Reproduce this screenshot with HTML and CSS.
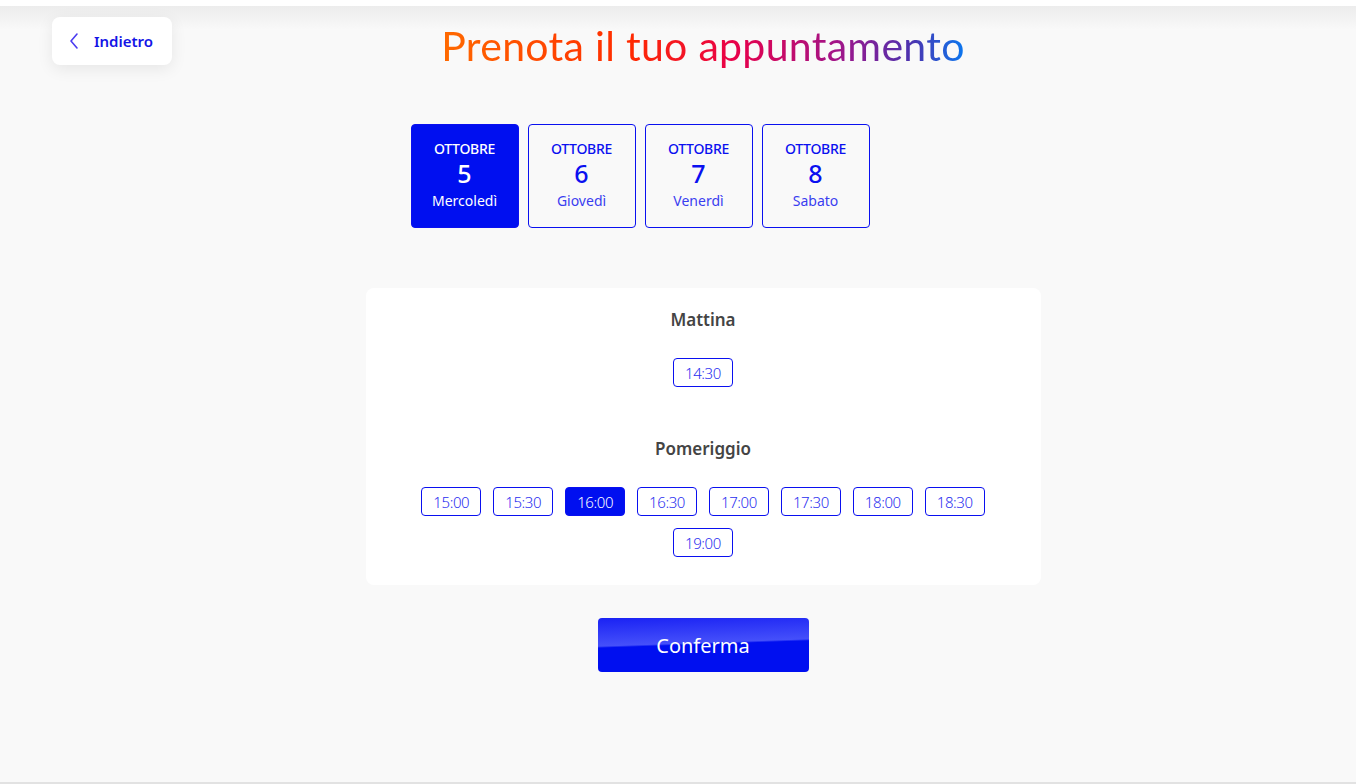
FILE: index.html
```html
<!DOCTYPE html>
<html lang="it">
<head>
  <meta charset="UTF-8" />
  <meta name="viewport" content="width=device-width, initial-scale=1.0"/>
  <title>Prenota il tuo appuntamento</title>
  <link rel="stylesheet" href="styles.css">
</head>
<body>
  <div class="topbar"></div>
  <div class="page">
    <a href="#" class="back-btn">
      <svg width="12" height="18" viewBox="0 0 12 18"><path d="M9 2 L3 9 L9 16" fill="none" stroke="#4b3cf0" stroke-width="1.6" stroke-linecap="round" stroke-linejoin="round"/></svg>
      <span>Indietro</span>
    </a>

    <div class="main">
      <div class="title-row">
        <h1 class="title">Prenota il tuo appuntamento</h1>
      </div>

      <div class="wrap">
        <div class="days">
          <div class="day active">
            <div class="month">OTTOBRE</div>
            <div class="num">5</div>
            <div class="weekday">Mercoledì</div>
          </div>
          <div class="day">
            <div class="month">OTTOBRE</div>
            <div class="num">6</div>
            <div class="weekday">Giovedì</div>
          </div>
          <div class="day">
            <div class="month">OTTOBRE</div>
            <div class="num">7</div>
            <div class="weekday">Venerdì</div>
          </div>
          <div class="day">
            <div class="month">OTTOBRE</div>
            <div class="num">8</div>
            <div class="weekday">Sabato</div>
          </div>
        </div>

        <div class="slots-card">
          <h2>Mattina</h2>
          <div class="slots">
            <button class="slot">14:30</button>
          </div>

          <h2 class="afternoon">Pomeriggio</h2>
          <div class="slots">
            <button class="slot">15:00</button>
            <button class="slot">15:30</button>
            <button class="slot selected">16:00</button>
            <button class="slot">16:30</button>
            <button class="slot">17:00</button>
            <button class="slot">17:30</button>
            <button class="slot">18:00</button>
            <button class="slot">18:30</button>
            <button class="slot">19:00</button>
          </div>
        </div>

        <div class="actions">
          <button class="confirm-btn">Conferma</button>
        </div>
      </div>
    </div>
  </div>
</body>
</html>
```

FILE: styles.css
```css
html, body { margin: 0; padding: 0; }
body { font-family: "Noto Sans", "Open Sans", Arial, sans-serif; background-color: #f9f9f9; height: 784px; overflow: hidden; }

.topbar { height: 6px; background: #fff; }
.page {
  position: relative;
  height: 776px;
  border-bottom: 2px solid #e2e2e2;
  background: linear-gradient(to bottom, #ececec 0px, #f9f9f9 24px);
}

.back-btn {
  position: absolute;
  left: 52px;
  top: 11px;
  width: 120px;
  height: 48px;
  box-sizing: border-box;
  padding-left: 16px;
  display: flex;
  align-items: center;
  gap: 14px;
  background: #fff;
  border-radius: 8px;
  box-shadow: 0 4px 16px rgba(0,0,0,0.08);
  text-decoration: none;
  color: #1414e6;
  font-size: 15px;
  font-weight: 600;
}

.main { padding-left: 50px; }

.title-row { display: flex; justify-content: center; padding-top: 14px; }
.title {
  margin: 0;
  font-family: Lato, "Noto Sans", sans-serif;
  font-weight: 400;
  font-size: 41px;
  line-height: 52px;
  letter-spacing: 0.3px;
  background: linear-gradient(to right, #ff6a00 0%, #ff2a00 36%, #e8004a 56%, #a0158a 76%, #4a34b0 90%, #0a78f0 100%);
  -webkit-background-clip: text;
  background-clip: text;
  color: transparent;
}

.wrap { width: 675px; margin: 0 auto; }

.days { display: flex; gap: 9px; padding-left: 45px; margin-top: 52px; }
.day {
  width: 108px;
  height: 104px;
  box-sizing: border-box;
  border: 1px solid #0a10f0;
  border-radius: 4px;
  color: #0a10f0;
  text-align: center;
  padding-top: 15px;
}
.day .month { font-size: 14px; font-weight: 500; line-height: 18px; letter-spacing: -0.3px; }
.day .num { font-size: 25px; font-weight: 500; line-height: 30px; }
.day .weekday { font-size: 14px; line-height: 20px; color: #3a3ef0; margin-top: 3px; }
.day.active { background: #000ff0; color: #fff; }
.day.active .weekday { color: #fff; }

.slots-card {
  margin-top: 60px;
  background: #fff;
  border-radius: 8px;
  padding: 20px 0 28px;
}
.slots-card h2 {
  margin: 0;
  text-align: center;
  font-size: 17px;
  font-weight: 600;
  color: #444;
  line-height: 24px;
}
.slots-card h2.afternoon { margin-top: 50px; }

.slots {
  display: flex;
  flex-wrap: wrap;
  justify-content: center;
  gap: 12px;
  margin-top: 26px;
  padding: 0 50px;
}
.slot {
  height: 29px;
  padding: 0 11px;
  border: 1px solid #0a10f0;
  border-radius: 4px;
  background: #fff;
  color: #2a2ef0;
  font-family: "Noto Sans", Arial, sans-serif;
  font-size: 15px;
  font-weight: 300;
  letter-spacing: -0.4px;
}
.slot.selected { background: #000ff0; color: #fff; }

.actions { display: flex; justify-content: center; margin-top: 33px; }
.confirm-btn {
  width: 211px;
  height: 54px;
  border: none;
  border-radius: 4px;
  color: #fff;
  font-family: "Noto Sans", Arial, sans-serif;
  font-size: 20px;
  background: linear-gradient(178deg, #1a22f4 0%, #4550fa 46%, #000ff0 49%, #000ff0 100%);
}
```
